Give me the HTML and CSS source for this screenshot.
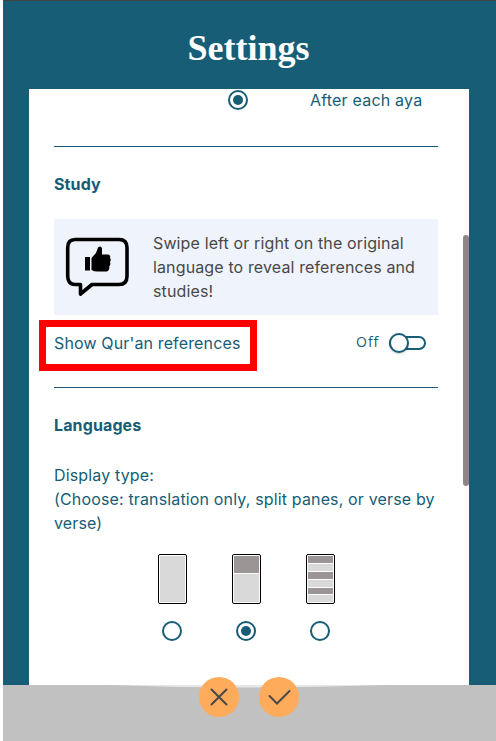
FILE: index.html
```html
<!DOCTYPE html>
<html lang="en">
<head>
<meta charset="utf-8">
<title>Settings</title>
<link rel="stylesheet" href="styles.css">
</head>
<body>
<div class="app">
  <header class="header"><h1 class="title">Settings</h1></header>
  <main class="panel">
    <section class="aya-option">
      <span class="radio checked"></span>
      <span class="aya-label">After each aya</span>
    </section>
    <section class="study">
      <h2 class="heading">Study</h2>
      <div class="tip">
        <svg class="tip-icon" width="66" height="62" viewBox="0 0 66 62">
          <path d="M10 3.500H54Q62 3.500 62 11.500V40Q62 48.500 54 48.500H27L15.500 58V48.500H10Q2.700 48.500 2.700 40V11.500Q2.700 3.500 10 3.500Z" fill="none" stroke="#000" stroke-width="3.600" stroke-linejoin="round"/>
          <path d="M20 21H25V34.500H20ZM26.500 22L31 17L33 11.500Q36 9 37 12.500V18.500H43.500Q46 19.500 45 22Q46.500 23.500 45 26Q46 28.500 44.200 30.500Q45 34.500 42 35.500H32.500Q29 35.500 26.500 34Z"/>
        </svg>
        <p class="tip-text">Swipe left or right on the original language to reveal references and studies!</p>
      </div>
      <div class="reference-row">
        <span class="reference-label">Show Qur'an references</span>
        <span class="state">Off</span>
        <span class="toggle"><span class="knob"></span></span>
      </div>
    </section>
    <section class="languages">
      <h2 class="heading">Languages</h2>
      <p class="description">Display type:<br>(Choose: translation only, split panes, or verse by verse)</p>
      <div class="choices">
        <div class="choice"><div class="preview"><i class="light"></i></div><span class="radio"></span></div>
        <div class="choice"><div class="preview split"><i class="dark"></i><i class="light"></i></div><span class="radio checked"></span></div>
        <div class="choice"><div class="preview verses"><i class="dark"></i><i class="light"></i><i class="dark"></i><i class="light"></i><i class="dark"></i><i class="light"></i></div><span class="radio"></span></div>
      </div>
    </section>
    <span class="scrollbar"></span>
  </main>
  <footer class="footer">
    <svg class="curve" width="280" height="3" viewBox="0 0 280 3"><path d="M0 0H280Q210 2.500 140 2.500T0 0Z" fill="#e6e6e6"/></svg>
    <button class="action"><svg width="40" height="40" viewBox="0 0 40 40"><path d="M12.500 12.500L27.500 27.500M27.500 12.500L12.500 27.500"/></svg></button>
    <button class="action"><svg width="40" height="40" viewBox="0 0 40 40"><path d="M10.500 19L18 26.500L30.500 14"/></svg></button>
  </footer>
</div>
</body>
</html>
```
FILE: styles.css
```css
* { box-sizing: border-box; }
body { margin: 0; background: #fff; overflow: hidden; font: 16px/24px Inter, sans-serif; color: #165d75; }
.app { height: 741px; margin-left: 3px; background: #165d75; border-top: 1px solid #444; display: flex; flex-direction: column; }
.header { height: 88px; padding-top: 27px; text-align: center; }
.title { margin: 0 2px 0 0; color: #fff; font: bold 36px/40px "Liberation Serif", serif; }
.panel { position: relative; height: 596px; width: 440px; margin-left: 26px; padding: 0 31px 0 25px; background: #fff; }
.aya-option { height: 58px; border-bottom: 1px solid #165d75; display: flex; align-items: flex-start; padding-left: 174px; }
.radio { display: block; width: 20px; height: 20px; border: 2px solid #165d75; border-radius: 50%; padding: 3px; margin-top: 1px; flex: none; }
.checked::before { content: ""; display: block; width: 10px; height: 10px; border-radius: 50%; background: #165d75; }
.aya-label { margin: -1px 0 0 62px; letter-spacing: .2px; }
.study { height: 241px; padding-top: 25px; border-bottom: 1px solid #165d75; }
.heading { margin: 0; font-size: 16px; line-height: 24px; font-weight: 700; letter-spacing: .12px; }
.tip { height: 96px; margin-top: 23px; background: #eff3fb; color: #484848; display: flex; padding-top: 12px; }
.tip-icon { margin: 5px 0 0 11px; flex: none; }
.tip-text { width: 275px; margin: 0 0 0 22px; letter-spacing: .13px; }
.reference-row { display: flex; margin-top: 5px; }
.reference-label { width: 218px; height: 51px; margin-left: -15px; padding: 5px 8px; border: 7px solid #f00; letter-spacing: .14px; line-height: 23px; white-space: nowrap; }
.state { margin-left: 99px; width: 33px; padding-top: 10px; font: 14px/24px "Open Sans", sans-serif; letter-spacing: 1px; }
.toggle { position: relative; margin-top: 16px; width: 37px; height: 14px; border: 2px solid #165d75; border-radius: 8px; }
.knob { position: absolute; left: -2px; top: -5px; width: 20px; height: 20px; border: 2px solid #165d75; border-radius: 50%; background: #fff; box-shadow: 0 1px 2px #0003; }
.languages { padding-top: 25px; }
.description { margin: 26px 0 0; letter-spacing: .15px; }
.choices { display: flex; justify-content: center; gap: 45px; margin: 19px 0 0; }
.choice { width: 29px; display: flex; flex-direction: column; align-items: center; gap: 16px; }
.preview { width: 29px; height: 50px; padding: 1px; border: 1px solid #000; border-radius: 2px; display: grid; gap: 1px; }
.split { grid-template-rows: 17px 28px; }
.verses { grid-template-rows: 7px 7px 7px 7px 6px 7px; }
.light { background: #d9d9d9; }
.dark { background: #9c9595; }
.footer { position: relative; height: 56px; background: #c1c1c1; display: flex; gap: 20px; padding-left: 196px; }
.curve { position: absolute; left: 106px; top: 0; }
.action { position: relative; width: 40px; height: 40px; margin: -8px 0 0; padding: 0; border: 0; border-radius: 50%; background: #ffab5c; }
.action path { fill: none; stroke: #484848; stroke-width: 2; stroke-linecap: round; }
.action svg { display: block; }
.scrollbar { position: absolute; right: 0; top: 146px; width: 6px; height: 251px; border-radius: 3px; background: #888; }
```
